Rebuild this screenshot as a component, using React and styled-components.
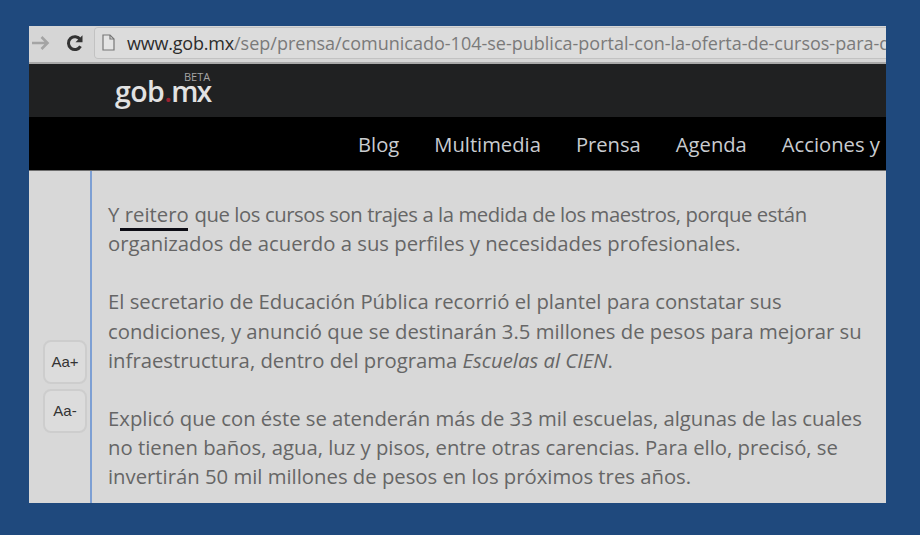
import React from 'react'
import styled, { createGlobalStyle } from 'styled-components'

const GlobalStyle = createGlobalStyle`
  html, body { margin: 0; padding: 0; height: 100%; background: #1f497d; }
  #root { height: 100%; }
`

const Page = styled.div`
  width: 920px;
  height: 535px;
  box-sizing: border-box;
  padding: 26px 34px 32px 29px;
  background: #1f497d;
  overflow: hidden;
`

const Window = styled.div`
  height: 100%;
  display: flex;
  flex-direction: column;
  overflow: hidden;
`

const Toolbar = styled.div`
  flex: 0 0 38px;
  box-sizing: border-box;
  display: flex;
  align-items: center;
  padding: 0 0 3px 2px;
  background: #d6d6d6;
  border-bottom: 2px solid #a9a9a9;
`

const ToolButton = styled.svg`
  flex: none;
  width: 20px;
  height: 20px;
  margin-right: ${props => props.$gap}px;
`

const AddressBar = styled.div`
  flex: 1;
  min-width: 0;
  height: 30px;
  display: flex;
  align-items: center;
  gap: 12px;
  padding-left: 7px;
  background: #dcdcdc;
  border-radius: 3px 0 0 3px;
  box-shadow: -1px 0 0 #c2c2c2, 0 -1px 0 #c2c2c2, 0 1px 0 #c2c2c2;
  overflow: hidden;
`

const Url = styled.div`
  font: 18px "Open Sans", sans-serif;
  color: #7a7a7a;
  white-space: nowrap;
  strong { font-weight: 400; color: #2c2c2c; letter-spacing: -0.2px; }
`

const BrandBar = styled.div`
  flex: 0 0 53px;
  display: flex;
  align-items: center;
  padding-left: 86px;
  background: #202122;
`

const Logo = styled.div`
  position: relative;
  font: 600 28.5px/1 "Open Sans", sans-serif;
  letter-spacing: -0.6px;
  color: #e2e2e2;
  margin-top: 1px;
  em { font-style: normal; color: #9c2230; }
  span { letter-spacing: -2px; }
`

const Beta = styled.small`
  position: absolute;
  right: 0;
  top: -6px;
  font: 11px/1 "Open Sans", sans-serif;
  letter-spacing: 0;
  color: #a6a6a6;
`

const NavBar = styled.nav`
  flex: 0 0 54px;
  box-sizing: border-box;
  display: flex;
  align-items: center;
  gap: 35px;
  padding-left: 329px;
  background: #000;
  border-bottom: 1px solid #6e6e6e;
  white-space: nowrap;
  overflow: hidden;
`

const NavLink = styled.a`
  font: 20.2px "Open Sans", sans-serif;
  color: #c9ccd0;
`

const Content = styled.div`
  flex: 1;
  min-height: 0;
  display: flex;
  background: #d8d8d8;
`

const Rail = styled.aside`
  flex: 0 0 63px;
  box-sizing: border-box;
  display: flex;
  flex-direction: column;
  gap: 5px;
  padding: 169px 0 0 14px;
  border-right: 2px solid #7d9fd3;
`

const SizeButton = styled.button`
  width: 44px;
  height: 44px;
  box-sizing: border-box;
  display: flex;
  justify-content: center;
  align-items: ${props => props.$top ? 'flex-start' : 'center'};
  padding: ${props => props.$top ? '11px' : '0'} 0 0;
  background: #dcdcdc;
  border: 2px solid #cdcdcd;
  border-radius: 8px;
  font: 15px/1.2 "Liberation Sans", sans-serif;
  color: #333;
`

const Article = styled.main`
  flex: 1;
  padding: 29px 0 0 16px;
  font: 20.3px/29.2px "Open Sans", sans-serif;
  color: #666;
`

const Paragraph = styled.p`
  margin: 0 0 29px;
  white-space: nowrap;
`

const Tight = styled.span`
  letter-spacing: ${props => props.$spacing}px;
`

const Marked = styled.span`
  position: relative;
  letter-spacing: 0;
  margin: 0 1px;
  &::after {
    content: "";
    position: absolute;
    left: -5px;
    right: 1px;
    bottom: -3px;
    height: 3px;
    background: #0c0c14;
  }
`

const navItems = ['Blog', 'Multimedia', 'Prensa', 'Agenda', 'Acciones y']

export default function App() {
  return (
    <>
      <GlobalStyle />
      <Page>
        <Window>
          <Toolbar>
            <ToolButton $gap={14} viewBox="0 0 20 20" fill="none" stroke="#a4a4a4" strokeWidth="2.6">
              <path d="M1 10h15M10.5 4l6 6-6 6" />
            </ToolButton>
            <ToolButton $gap={10} viewBox="0 0 20 20" fill="none" stroke="#333" strokeWidth="3">
              <path d="M15.5 13.2a6.4 6.4 0 1 1-.3-6.6" />
              <path d="M17.5 2.2v7h-7z" fill="#333" stroke="none" />
            </ToolButton>
            <AddressBar>
              <svg width="13" height="17" viewBox="0 0 13 17" fill="#e4e4e4" stroke="#777" strokeWidth="1.2" style={{ flex: 'none' }}>
                <path d="M1 1h7l4 4v11H1z" />
                <path d="M8 1v4h4" fill="none" />
              </svg>
              <Url><strong>www.gob.mx</strong>/sep/prensa/comunicado-104-se-publica-portal-con-la-oferta-de-cursos-para-docentes</Url>
            </AddressBar>
          </Toolbar>
          <BrandBar>
            <Logo>gob<em>.</em><span>mx</span><Beta>BETA</Beta></Logo>
          </BrandBar>
          <NavBar>
            {navItems.map(item => <NavLink key={item}>{item}</NavLink>)}
          </NavBar>
          <Content>
            <Rail>
              <SizeButton>Aa+</SizeButton>
              <SizeButton $top>Aa-</SizeButton>
            </Rail>
            <Article>
              <Paragraph>
                <Tight $spacing={-0.42}>Y <Marked>reitero</Marked> que los cursos son trajes a la medida de los maestros, porque están</Tight><br />
                organizados de acuerdo a sus perfiles y necesidades profesionales.
              </Paragraph>
              <Paragraph>
                El secretario de Educación Pública recorrió el plantel para constatar sus<br />
                condiciones, y anunció que se destinarán 3.5 millones de pesos para mejorar su<br />
                infraestructura, dentro del programa <em>Escuelas al CIEN</em>.
              </Paragraph>
              <Paragraph>
                Explicó que con éste se atenderán más de 33 mil escuelas, algunas de las cuales<br />
                no tienen baños, agua, luz y pisos, entre otras carencias. Para ello, precisó, se<br />
                invertirán 50 mil millones de pesos en los próximos tres años.
              </Paragraph>
            </Article>
          </Content>
        </Window>
      </Page>
    </>
  )
}
